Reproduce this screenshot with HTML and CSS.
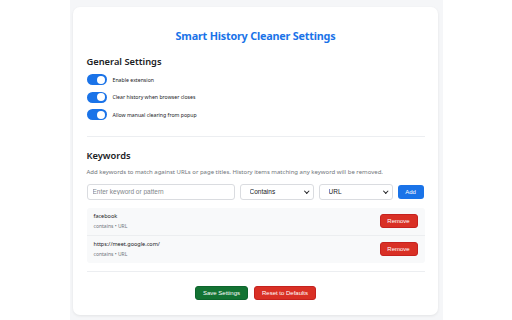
FILE: index.html
```html
<!DOCTYPE html>
<html lang="en">
<head>
  <meta charset="UTF-8" />
  <meta name="viewport" content="width=device-width, initial-scale=1.0" />
  <title>Smart History Cleaner Settings</title>
  <link rel="stylesheet" href="styles.css">
</head>
<body>

<div class="page">
  <div class="card">
    <h1 class="card--title">Smart History Cleaner Settings</h1>

    <section class="section">
      <h2 class="section--title">General Settings</h2>
      <label class="toggle-row">
        <span class="toggle is-on"></span>
        <span class="toggle-row--label">Enable extension</span>
      </label>
      <label class="toggle-row">
        <span class="toggle is-on"></span>
        <span class="toggle-row--label">Clear history when browser closes</span>
      </label>
      <label class="toggle-row">
        <span class="toggle is-on"></span>
        <span class="toggle-row--label">Allow manual clearing from popup</span>
      </label>
    </section>

    <section class="section section--keywords">
      <h2 class="section--title">Keywords</h2>
      <p class="section--hint">Add keywords to match against URLs or page titles. History items matching any keyword will be removed.</p>

      <div class="keyword-form">
        <input class="keyword-form--input" type="text" placeholder="Enter keyword or pattern">
        <div class="select-wrap">
          <select class="keyword-form--select">
            <option>Contains</option>
            <option>Starts with</option>
            <option>Exact</option>
          </select>
        </div>
        <div class="select-wrap">
          <select class="keyword-form--select">
            <option>URL</option>
            <option>Title</option>
          </select>
        </div>
        <button class="btn btn--blue">Add</button>
      </div>

      <ul class="keyword-list">
        <li class="keyword-item">
          <div>
            <div class="keyword-item--name">facebook</div>
            <div class="keyword-item--meta">contains &bull; URL</div>
          </div>
          <button class="btn btn--red btn--remove">Remove</button>
        </li>
        <li class="keyword-item">
          <div>
            <div class="keyword-item--name">https://meet.google.com/</div>
            <div class="keyword-item--meta">contains &bull; URL</div>
          </div>
          <button class="btn btn--red btn--remove">Remove</button>
        </li>
      </ul>
    </section>

    <div class="actions">
      <button class="btn btn--green btn--big">Save Settings</button>
      <button class="btn btn--red btn--big">Reset to Defaults</button>
    </div>
  </div>
</div>

</body>
</html>
```

FILE: styles.css
```css
body {
  margin: 0;
  background-color: #ffffff;
  font-family: 'Noto Sans', 'Open Sans', sans-serif;
  color: #202124;
}

.page {
  width: 373px;
  margin: 0 auto;
  padding: 7px 5px 5px 3px;
  box-sizing: border-box;
  background-color: #f5f6f8;
}

.card {
  background-color: #ffffff;
  border-radius: 7px;
  box-shadow: 0 1px 3px rgba(0, 0, 0, 0.08);
  padding: 20px 13px 15px 14px;
}

.card--title {
  margin: 0 0 10px;
  text-align: center;
  font-size: 10.8px;
  letter-spacing: -0.2px;
  line-height: 18px;
  font-weight: 700;
  color: #1a73e8;
}

.section {
  padding-bottom: 12px;
  border-bottom: 1px solid #eceef1;
  margin-bottom: 12px;
}

.section--keywords {
  padding-bottom: 8px;
}

.section--title {
  margin: 0 0 2px;
  font-size: 9.3px;
  line-height: 14px;
  font-weight: 600;
  color: #202124;
}

.section--keywords .section--title {
  margin-bottom: 1px;
}

.section--hint {
  margin: 5px 0 7px;
  font-size: 6px;
  line-height: 9px;
  color: #70757a;
}

.toggle-row {
  display: flex;
  align-items: center;
  gap: 6px;
  height: 17.5px;
}

.toggle {
  position: relative;
  width: 20px;
  height: 11px;
  border-radius: 6px;
  background-color: #ccc;
}

.toggle.is-on {
  background-color: #1a73e8;
}

.toggle::after {
  content: "";
  position: absolute;
  top: 1.5px;
  left: 1.5px;
  width: 8px;
  height: 8px;
  border-radius: 50%;
  background-color: #ffffff;
}

.toggle.is-on::after {
  left: 10.5px;
}

.toggle-row--label {
  font-size: 5.2px;
  color: #202124;
}

.keyword-form {
  display: flex;
  align-items: center;
  gap: 5px;
  margin-bottom: 8px;
}

.keyword-form--input,
.keyword-form--select {
  height: 16px;
  box-sizing: border-box;
  border: 1px solid #dadce0;
  border-radius: 3px;
  background-color: #ffffff;
  font-family: 'Liberation Sans', Arial, sans-serif;
  font-size: 6.5px;
  color: #202124;
  padding: 0 5px;
  outline: none;
}

.keyword-form--input {
  width: 148px;
}

.keyword-form--input::placeholder {
  color: #80868b;
}

.select-wrap {
  position: relative;
}

.select-wrap::after {
  content: "";
  position: absolute;
  right: 5px;
  top: 5.5px;
  width: 2.5px;
  height: 2.5px;
  border-right: 1px solid #202124;
  border-bottom: 1px solid #202124;
  transform: rotate(45deg);
  pointer-events: none;
}

.keyword-form--select {
  -webkit-appearance: none;
  appearance: none;
  display: block;
  width: 74px;
  padding: 0 12px 0 9px;
}

.btn {
  font-family: 'Liberation Sans', Arial, sans-serif;
  font-size: 6px;
  color: #ffffff;
  border: 1px solid transparent;
  border-radius: 3px;
  cursor: pointer;
  padding: 0 6px;
  height: 14px;
}

.btn--blue {
  background-color: #1a73e8;
  width: 26px;
  padding: 0;
}

.btn--red {
  background-color: #d93025;
  border-color: #c5221f;
}

.btn--green {
  background-color: #137333;
  border-color: #0d652d;
}

.btn--remove {
  width: 38px;
  padding: 0;
}

.btn--big {
  height: 14px;
  padding: 0 7px;
}

.keyword-list {
  list-style: none;
  margin: 0;
  padding: 0;
  background-color: #f8f9fa;
  border-radius: 3px;
}

.keyword-item {
  display: flex;
  align-items: center;
  justify-content: space-between;
  box-sizing: border-box;
  height: 27.5px;
  padding: 0 7px;
}

.keyword-item + .keyword-item {
  border-top: 1px solid #eceef0;
}

.keyword-item--name {
  font-size: 5.5px;
  line-height: 9px;
  color: #202124;
}

.keyword-item--meta {
  font-size: 5px;
  line-height: 10px;
  color: #70757a;
}

.actions {
  display: flex;
  justify-content: center;
  gap: 6px;
  padding-top: 2px;
}
```
